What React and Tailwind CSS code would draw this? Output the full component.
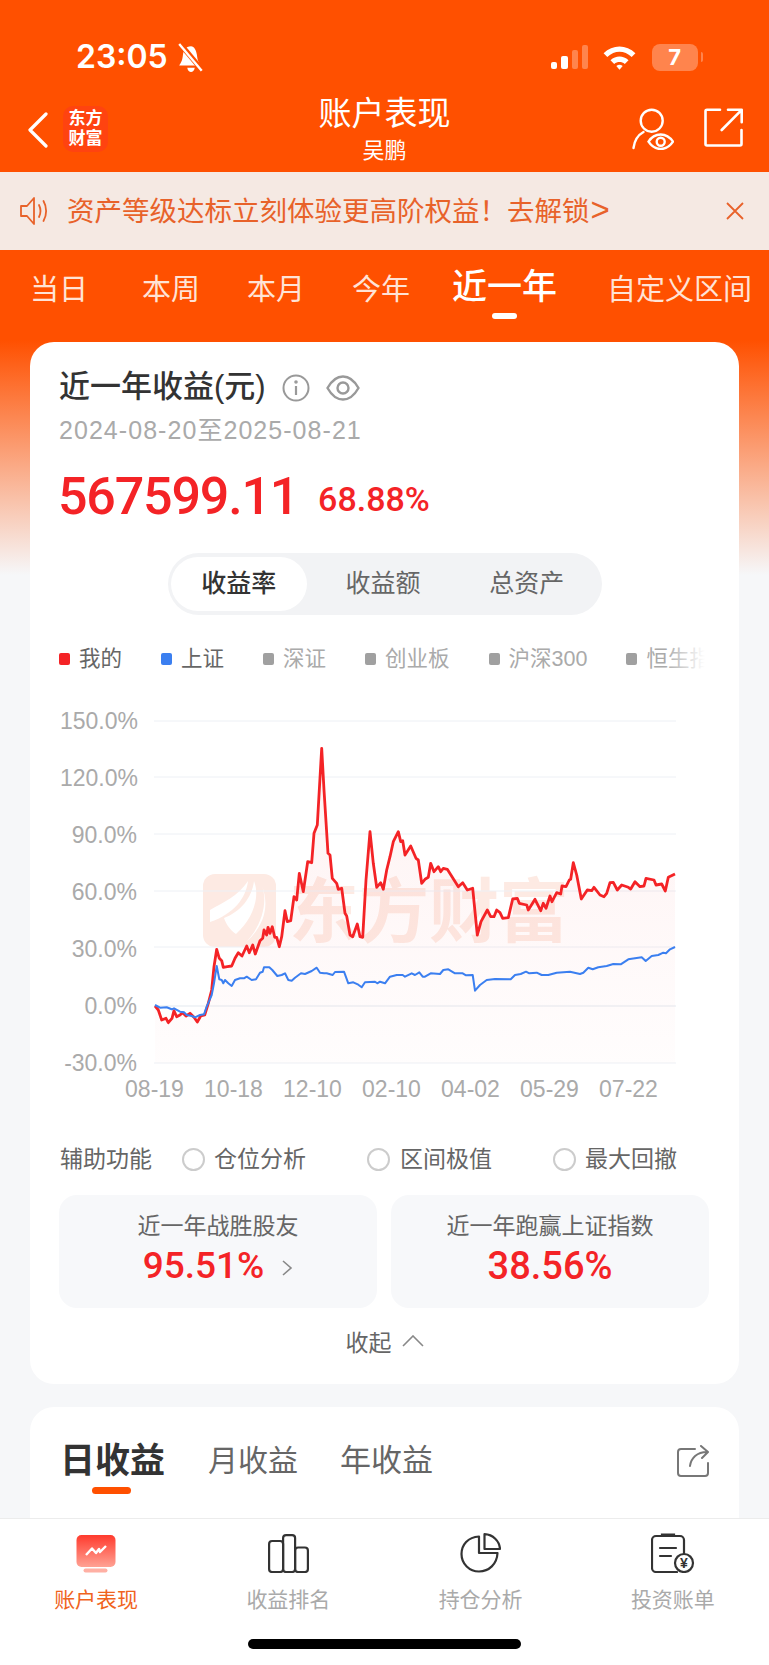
import React from "react";

const RANGE_TABS = [
  { label: "当日", cls: "ml-[30px] w-[58px] text-[29px]" },
  { label: "本周", cls: "ml-[54px] w-[58px] text-[29px]" },
  { label: "本月", cls: "ml-[47px] w-[58px] text-[29px]" },
  { label: "今年", cls: "ml-[47px] w-[58px] text-[29px]" },
  { label: "近一年", cls: "ml-[42px] w-[105px] text-[35px] font-medium text-white -translate-y-[3px]" },
  { label: "自定义区间", cls: "ml-[50px] w-[145px] text-[29px]" },
];

const LEGEND = [
  { label: "我的", dot: "bg-[#f42326]", text: "text-[#666]" },
  { label: "上证", dot: "bg-[#3b7ff0]", text: "text-[#666]" },
  { label: "深证", dot: "bg-[#a0a0a0]", text: "text-[#aaa]" },
  { label: "创业板", dot: "bg-[#a0a0a0]", text: "text-[#aaa]" },
  { label: "沪深300", dot: "bg-[#a0a0a0]", text: "text-[#aaa]" },
  { label: "恒生指数", dot: "bg-[#a0a0a0]", text: "text-[#aaa]" },
];

const Y_LABELS = ["150.0%", "120.0%", "90.0%", "60.0%", "30.0%", "0.0%", "-30.0%"];
const X_LABELS = ["08-19", "10-18", "12-10", "02-10", "04-02", "05-29", "07-22"];
const GRID_Y = [15, 71, 128, 185, 241, 300, 357];

// Series are sampled in two runs, each with its own horizontal origin.
const RED_A = [345,948,355,960,365,990,378,985,385,998,396,985,402,962,410,980,420,975,428,968,438,978,450,970,462,982,472,996,482,978,494,975,505,940,515,900,522,830,530,778,538,805,545,812,550,832,562,830,575,828,585,805,595,788,606,798,620,768,628,788,638,765,646,792,660,752,668,745,672,720,680,735,684,712,690,730,697,710,704,742,710,742,718,770,725,740,735,662,742,695,752,692,762,620,770,630,778,550,790,605,803,515,815,518,822,430,832,405,838,300,845,175,852,300,864,490,870,495,877,565,890,580,895,598,905,595,915,670,920,678,930,735,938,740,952,702,960,740,968,742,978,570,990,425,1000,520,1010,592,1022,578,1030,598];
const RED_B = [20,540,30,500,40,455,55,425,62,455,68,452,75,495,92,468,108,505,115,510,125,580,135,568,145,562,152,520,162,545,175,530,182,545,190,535,202,538,235,590,248,578,262,600,278,595,292,735,303,695,322,660,332,680,342,680,350,660,360,668,368,685,385,683,398,627,412,625,418,640,440,645,445,660,465,628,482,662,490,640,498,655,510,618,516,635,530,608,542,612,546,588,558,590,568,570,572,568,580,518,590,555,604,627,622,600,635,602,642,592,660,615,672,620,680,610,690,578,700,577,712,600,725,585,745,592,752,597,765,575,780,590,792,588,798,565,822,570,828,585,845,582,856,603,865,562,885,552];
const BLUE_A = [345,945,360,953,380,952,395,958,402,955,420,965,432,967,440,975,455,978,465,982,480,975,492,973,500,950,515,915,522,880,530,828,538,868,545,870,550,880,555,870,565,880,575,888,585,870,600,865,612,865,620,860,635,870,648,868,660,848,668,845,672,832,688,832,697,840,712,858,725,855,735,850,745,870,755,872,765,863,783,850,795,852,815,843,830,833,840,848,852,850,860,850,878,855,885,846,912,845,925,880,940,877,955,884,965,892,975,877,1005,875,1012,880];
const BLUE_B = [0,875,15,880,30,860,50,855,68,855,75,860,95,850,105,855,118,847,128,860,135,860,152,850,180,852,190,840,205,838,225,850,248,850,258,856,278,855,285,902,300,885,320,870,345,867,392,868,405,855,422,852,438,845,448,850,470,848,485,855,505,855,530,848,570,845,600,852,610,848,625,833,638,838,655,832,680,828,700,822,722,823,745,808,785,802,797,813,815,798,835,795,850,788,858,790,870,778,885,771];

const toPoints = (samples, originX) => {
  const pts = [];
  for (let i = 0; i < samples.length; i += 2) {
    pts.push([+(samples[i] / 3 + originX - 154).toFixed(1), +(samples[i + 1] / 3 + 690 - 706).toFixed(1)]);
  }
  return pts;
};

const redPts = [...toPoints(RED_A, 40), ...toPoints(RED_B, 380)];
const bluePts = [...toPoints(BLUE_A, 40), ...toPoints(BLUE_B, 380)];
const line = (pts) => pts.map((p, i) => `${i ? "L" : "M"}${p[0]} ${p[1]}`).join(" ");
const area = `${line(redPts)} L${redPts[redPts.length - 1][0]} 357 L${redPts[0][0]} 357 Z`;

const ReturnChart = () => (
  <svg width="522" height="372" viewBox="0 0 522 372">
    <defs>
      <linearGradient id="redFade" x1="0" y1="0" x2="0" y2="1">
        <stop offset="0" stopColor="#f42326" stopOpacity="0.06" />
        <stop offset="1" stopColor="#f42326" stopOpacity="0.01" />
      </linearGradient>
    </defs>
    {/* watermark */}
    <rect x="49" y="168" width="73" height="73" rx="12" fill="#fdeae3" />
    <path d="M56 204 C70 196 84 190 94 175 C92 192 80 208 56 216 Z" fill="#fff" />
    <path d="M100 175 C106 190 100 212 82 228 C76 224 72 218 70 212 C86 206 98 192 100 175 Z" fill="#fff" />
    <path d="M108 180 C114 196 108 220 92 236 C104 226 118 206 108 180 Z" fill="#fff" />
    <text x="135" y="231" fontSize="70" fontWeight="700" fill="#fdeae3" fontFamily="'Noto Sans CJK SC', sans-serif">东方财富</text>
    {GRID_Y.map((y) => (
      <line key={y} x1="0" x2="522" y1={y} y2={y} stroke="#edf0f5" strokeWidth={y === 300 ? 1.6 : 1} />
    ))}
    <path d={area} fill="url(#redFade)" />
    <path d={line(redPts)} fill="none" stroke="#f42326" strokeWidth="2.8" strokeLinejoin="round" />
    <path d={line(bluePts)} fill="none" stroke="#3b7ff0" strokeWidth="2" strokeLinejoin="round" />
  </svg>
);

const StatusBar = () => (
  <div className="h-[90px] flex text-white">
    <span className="ml-[76px] mt-[38px] h-[38px] leading-[38px] text-[32px] font-semibold font-['Inter',sans-serif]">23:05</span>
    <svg className="ml-[9px] mt-[43px]" width="28" height="30" viewBox="0 0 26 28">
      <path d="M13 3 C8 3 6 7 5.5 11 C5 16 4 18 2 21 H22 C20 18 19 16 18.5 11 C18 7 16 3 13 3Z" fill="#fff" />
      <path d="M9.5 23 H16.5 C16 26 14.5 27 13 27 C11.500 27 10 26 9.500 23Z" fill="#fff" />
      <path d="M3 1 L24 26" stroke="#ff5000" strokeWidth="5" />
      <path d="M2 1 L23 26" stroke="#fff" strokeWidth="2.2" />
    </svg>
    <div className="ml-[346px] mt-[45px] flex items-end h-[24px] gap-[4px]">
      <span className="w-[6px] h-[7px] rounded-[2px] bg-white" />
      <span className="w-[7px] h-[13px] rounded-[2px] bg-white" />
      <span className="w-[6px] h-[19px] rounded-[2px] bg-white/30" />
      <span className="w-[6px] h-[24px] rounded-[2px] bg-white/30" />
    </div>
    <svg className="ml-[14px] mt-[44px]" width="35" height="26" viewBox="0 0 33 24">
      <path d="M1.500 8.500 C10 0 23 0 31.500 8.500 L28 12 C21 5.500 12 5.500 5 12 Z" fill="#fff" />
      <path d="M8 15 C13 10.500 20 10.500 25 15 L21.500 18.500 C18.500 16 14.500 16 11.500 18.500 Z" fill="#fff" />
      <path d="M16.500 24 L13.500 20.500 C15.500 19 17.500 19 19.500 20.500 Z" fill="#fff" />
    </svg>
    <div className="ml-[15px] mt-[44px] w-[46px] h-[27px] rounded-[8px] bg-white/30 flex items-center justify-center text-[22px] font-bold font-['Inter',sans-serif]">7</div>
    <span className="ml-[3px] mt-[52px] w-[2px] h-[10px] rounded-r bg-white/30" />
  </div>
);

const NavBar = () => (
  <div className="relative h-[82px] flex text-white">
    <svg className="ml-[27px] mt-[22px]" width="22" height="36" viewBox="0 0 22 36">
      <path d="M19 2 L3 18 L19 34" fill="none" stroke="#fff" strokeWidth="3.200" strokeLinecap="round" strokeLinejoin="round" />
    </svg>
    <div className="ml-[14px] mt-[16px] w-[45px] h-[46px] rounded-[10px] bg-[#ff4310] flex flex-col items-center justify-center text-[17px] leading-[20px] font-bold">
      <span>东方</span>
      <span>财富</span>
    </div>
    <div className="absolute left-0 right-0 top-[5px] flex flex-col items-center">
      <span className="text-[33px] leading-[38px]">账户表现</span>
      <span className="mt-[4px] text-[22px] leading-[28px]">吴鹏</span>
    </div>
    <svg className="ml-[524px] mt-[18px]" width="42" height="42" viewBox="0 0 42 42" fill="none" stroke="#fff" strokeWidth="2.400" strokeLinecap="round">
      <circle cx="19.700" cy="12.700" r="11" />
      <path d="M1.500 40 C2.500 32 6 27 11.500 24" />
      <path d="M16.500 33.700 C20 28 25 26.500 28.700 26.500 C33 26.500 37.500 28.500 41 33.700 C37.500 39 33 41 28.700 41 C25 41 20 39 16.500 33.700Z" fill="#ff5000" />
      <circle cx="28.700" cy="33.700" r="4" />
    </svg>
    <svg className="ml-[30px] mt-[18px]" width="40" height="40" viewBox="0 0 40 40" fill="none" stroke="#fff" strokeWidth="2.600" strokeLinecap="round" strokeLinejoin="round">
      <path d="M16 1.800 H3 a1.500 1.500 0 0 0 -1.500 1.500 V36 a1.500 1.500 0 0 0 1.500 1.500 H36 a1.500 1.500 0 0 0 1.500 -1.500 V22" />
      <path d="M17.700 22 L37.700 1.800 M24 1.800 H37.700 V14.300" />
    </svg>
  </div>
);

const NoticeBanner = () => (
  <div className="h-[78px] bg-[#f5e9e3] flex items-center text-[#e8622a]">
    <svg className="ml-[19px]" width="30" height="30" viewBox="0 0 30 30" fill="none" stroke="#e8622a" strokeWidth="1.800" strokeLinejoin="round" strokeLinecap="round">
      <path d="M2 10 H8 L15 2 V28 L8 20 H2 Z" />
      <path d="M20 9 C22 13 22 17 20 21" />
      <path d="M24.500 5 C28 11 28 19 24.500 25" />
    </svg>
    <span className="ml-[18px] text-[27.5px] leading-[36px] w-[620px] whitespace-nowrap">资产等级达标立刻体验更高阶权益！去解锁<span className="text-[33px] leading-[36px] ml-[1px]">&gt;</span></span>
    <svg className="ml-[39px]" width="18" height="18" viewBox="0 0 18 18" fill="none" stroke="#e8622a" strokeWidth="1.800">
      <path d="M1 1 L17 17 M17 1 L1 17" />
    </svg>
  </div>
);

const RangeTabs = () => (
  <div className="relative h-[92px] flex items-start text-[#ffe3d6]">
    {RANGE_TABS.map((tab) => (
      <span key={tab.label} className={`mt-[20px] leading-[40px] whitespace-nowrap ${tab.cls}`}>
        {tab.label}
      </span>
    ))}
    <span className="absolute left-[492px] top-[63px] w-[25px] h-[6px] rounded-full bg-white" />
  </div>
);

const SummaryCard = () => (
  <section className="mx-[30px] rounded-[24px] bg-white px-[30px] pt-[25px] pb-[26px]">
    <div className="h-[40px] flex items-center -ml-px">
      <span className="text-[31px] leading-[40px] font-medium text-[#333]">近一年收益(元)</span>
      <svg className="ml-[16px] mt-[2px]" width="28" height="28" viewBox="0 0 28 28" fill="none" stroke="#999" strokeWidth="2">
        <circle cx="14" cy="14" r="12.500" />
        <path d="M14 12 V21" strokeWidth="2.200" />
        <circle cx="14" cy="8" r="0.800" fill="#999" />
      </svg>
      <svg className="ml-[16px] mt-[2px]" width="34" height="26" viewBox="0 0 34 26" fill="none" stroke="#999" strokeWidth="2.400">
        <path d="M1.500 13 C6 5 12 1.500 17 1.500 C22 1.500 28 5 32.500 13 C28 21 22 24.500 17 24.500 C12 24.500 6 21 1.500 13Z" />
        <circle cx="17" cy="13" r="5.500" />
      </svg>
    </div>
    <div className="mt-[8px] -ml-px h-[30px] text-[25px] leading-[30px] text-[#aaa] tracking-[1.05px] whitespace-nowrap">2024-08-20至2025-08-21</div>
    <div className="mt-[22px] -ml-[2px] h-[60px] flex items-center text-[#f42326] font-['Roboto',sans-serif] font-medium">
      <span className="text-[52px] leading-[60px] tracking-[-1.2px]">567599.11</span>
      <span className="ml-[20px] mt-[4px] text-[34px] leading-[40px]">68.88%</span>
    </div>

    <div className="mt-[26px] mx-auto w-[434px] h-[62px] rounded-full bg-[#f2f3f5] flex px-[3px] py-[4px] text-[25px] text-[#666]">
      <span className="w-[137px] rounded-full bg-white flex items-center justify-center font-medium text-[#333]">收益率</span>
      <span className="ml-[4px] w-[144px] flex items-center justify-center">收益额</span>
      <span className="w-[144px] flex items-center justify-center">总资产</span>
    </div>

    <div className="relative mt-[29px] -ml-px w-[646px] h-[30px] overflow-hidden flex items-center gap-[39px] whitespace-nowrap">
      {LEGEND.map((item) => (
        <div key={item.label} className="flex items-center gap-[9px] shrink-0">
          <span className={`w-[11px] h-[12px] rounded-[2px] ${item.dot}`} />
          <span className={`text-[21.5px] leading-[30px] ${item.text}`}>{item.label}</span>
        </div>
      ))}
      <span className="absolute right-0 top-0 h-full w-[40px] bg-gradient-to-r from-white/0 to-white" />
    </div>

    <div className="mt-[32px] flex gap-[17px]">
      <div className="w-[77px] h-[372px] flex flex-col justify-between text-right text-[23px] leading-[30px] text-[#aaa] whitespace-nowrap">
        {Y_LABELS.map((label) => (
          <span key={label}>{label}</span>
        ))}
      </div>
      <ReturnChart />
    </div>
    <div className="pl-[55px] flex h-[22px] text-[23px] leading-[22px] text-[#aaa]">
      {X_LABELS.map((label) => (
        <span key={label} className="w-[79px] text-center">{label}</span>
      ))}
    </div>

    <div className="mt-[44px] h-[30px] flex items-center text-[23px] leading-[30px] text-[#666] whitespace-nowrap">
      <span className="w-[122px]">辅助功能</span>
      <span className="w-[23px] h-[23px] rounded-full border-2 border-[#ccc]" />
      <span className="ml-[9px] w-[153px]">仓位分析</span>
      <span className="w-[23px] h-[23px] rounded-full border-2 border-[#ccc]" />
      <span className="ml-[10px] w-[153px]">区间极值</span>
      <span className="w-[23px] h-[23px] rounded-full border-2 border-[#ccc]" />
      <span className="ml-[9px]">最大回撤</span>
    </div>

    <div className="mt-[21px] -ml-px grid grid-cols-2 gap-[14px] w-[650px]">
      <div className="h-[113px] rounded-[18px] bg-[#f7f8fa] flex flex-col items-center pt-[16px]">
        <span className="text-[23px] leading-[30px] text-[#666]">近一年战胜股友</span>
        <div className="mt-[2px] flex items-center">
          <span className="text-[37px] leading-[46px] font-medium text-[#f42326] font-['Roboto',sans-serif]">95.51%</span>
          <svg className="ml-[17px] mt-[4px]" width="12" height="16" viewBox="0 0 12 16" fill="none" stroke="#888" strokeWidth="1.600">
            <path d="M2 1 L10 8 L2 15" />
          </svg>
        </div>
      </div>
      <div className="h-[113px] rounded-[18px] bg-[#f7f8fa] flex flex-col items-center pt-[16px]">
        <span className="text-[23px] leading-[30px] text-[#666]">近一年跑赢上证指数</span>
        <span className="mt-[2px] text-[38px] leading-[46px] font-medium text-[#f42326] font-['Roboto',sans-serif]">38.56%</span>
      </div>
    </div>

    <div className="mt-[20px] h-[30px] flex items-center justify-center text-[23px] leading-[30px] text-[#666]">
      <span>收起</span>
      <svg className="ml-[10px] mb-[4px]" width="22" height="12" viewBox="0 0 22 12" fill="none" stroke="#888" strokeWidth="1.600">
        <path d="M1 11 L11 1 L21 11" />
      </svg>
    </div>
  </section>
);

const DailyCard = () => (
  <section className="mt-[23px] mx-[30px] h-[200px] rounded-t-[24px] bg-white flex flex-col">
    <div className="mt-[32px] h-[44px] flex items-center">
      <span className="ml-[30px] text-[35px] leading-[44px] font-bold text-[#333]">日收益</span>
      <span className="ml-[43px] text-[30px] leading-[44px] text-[#666]">月收益</span>
      <span className="ml-[42px] text-[31px] leading-[44px] text-[#666]">年收益</span>
      <svg className="ml-[244px]" width="32" height="32" viewBox="0 0 32 32" fill="none" stroke="#777" strokeWidth="2" strokeLinecap="round" strokeLinejoin="round">
        <path d="M18 4 H4 a3 3 0 0 0 -3 3 V28 a3 3 0 0 0 3 3 H28 a3 3 0 0 0 3 -3 V18" />
        <path d="M13 21 C14 13 20 7 30 7 M24 1 L31 7 L25 13" />
      </svg>
    </div>
    <span className="ml-[62px] mt-[4px] w-[39px] h-[7px] rounded-full bg-[#ff5000]" />
  </section>
);

const BottomNav = () => (
  <footer className="h-[147px] bg-white border-t border-[#ececec] relative">
    <div className="grid grid-cols-4 text-[21px] leading-[28px] text-[#aaa]">
      <div className="flex flex-col items-center pt-[15px]">
        <svg width="40" height="39" viewBox="0 0 40 39">
          <defs>
            <linearGradient id="tabRed" x1="0" y1="0" x2="0" y2="1">
              <stop offset="0" stopColor="#ff3a2d" />
              <stop offset="1" stopColor="#ffa294" />
            </linearGradient>
          </defs>
          <rect x="0.500" y="1" width="39" height="32" rx="5" fill="url(#tabRed)" />
          <rect x="7.500" y="34.500" width="24" height="4" rx="2" fill="#ffb0a4" />
          <path d="M10 21 L16 14.500 L20 19 L23 15 L24 18 L30 12" fill="none" stroke="#fff" strokeWidth="2.400" strokeLinejoin="round" />
        </svg>
        <span className="mt-[13px] text-[#f0641e]">账户表现</span>
      </div>
      <div className="flex flex-col items-center pt-[15px]">
        <svg width="41" height="39" viewBox="0 0 41 39" fill="none" stroke="#333" strokeWidth="2.200">
          <rect x="1.100" y="7" width="14" height="31" rx="3" />
          <rect x="15.100" y="1.100" width="12" height="36.900" rx="3" />
          <rect x="27.100" y="13.500" width="12.800" height="24.500" rx="3" />
        </svg>
        <span className="mt-[13px]">收益排名</span>
      </div>
      <div className="flex flex-col items-center pt-[14px]">
        <svg width="41" height="40" viewBox="0 0 41 40" fill="none" stroke="#333" strokeWidth="2.200" strokeLinejoin="round">
          <path d="M19 3.500 C8 4 1.500 12 1.500 21 C1.500 31 9.500 38.500 19 38.500 C29 38.500 37 31 37.500 20 H19 Z" />
          <path d="M24.500 1.200 C33 1.500 39.500 8 40 16 H24.500 Z" />
        </svg>
        <span className="mt-[13px]">持仓分析</span>
      </div>
      <div className="flex flex-col items-center pt-[14px]">
        <svg width="44" height="40" viewBox="0 0 44 40" fill="none" stroke="#333" strokeWidth="2.200" strokeLinecap="round">
          <path d="M33 21 V7 a4 4 0 0 0 -4 -4 H5 a4 4 0 0 0 -4 4 V35 a4 4 0 0 0 4 4 H26" />
          <path d="M11 3 V1.500 H23 V3" />
          <path d="M9 15 H25 M9 23 H20" />
          <circle cx="33" cy="30" r="9" fill="#fff" />
          <text x="33" y="35" textAnchor="middle" fontSize="14" fontWeight="700" fill="#333" stroke="none" fontFamily="'Liberation Sans', sans-serif">¥</text>
        </svg>
        <span className="mt-[13px]">投资账单</span>
      </div>
    </div>
    <span className="absolute left-[248px] top-[120px] w-[273px] h-[10px] rounded-full bg-black" />
  </footer>
);

export default function App() {
  return (
    <div className="w-[769px] h-[1665px] flex flex-col overflow-hidden font-['Liberation_Sans','Noto_Sans_CJK_SC',sans-serif]">
      <main className="flex-1 overflow-hidden bg-[linear-gradient(180deg,#ff5000_340px,#f6f7f9_575px)]">
        <StatusBar />
        <NavBar />
        <NoticeBanner />
        <RangeTabs />
        <SummaryCard />
        <DailyCard />
      </main>
      <BottomNav />
    </div>
  );
}
